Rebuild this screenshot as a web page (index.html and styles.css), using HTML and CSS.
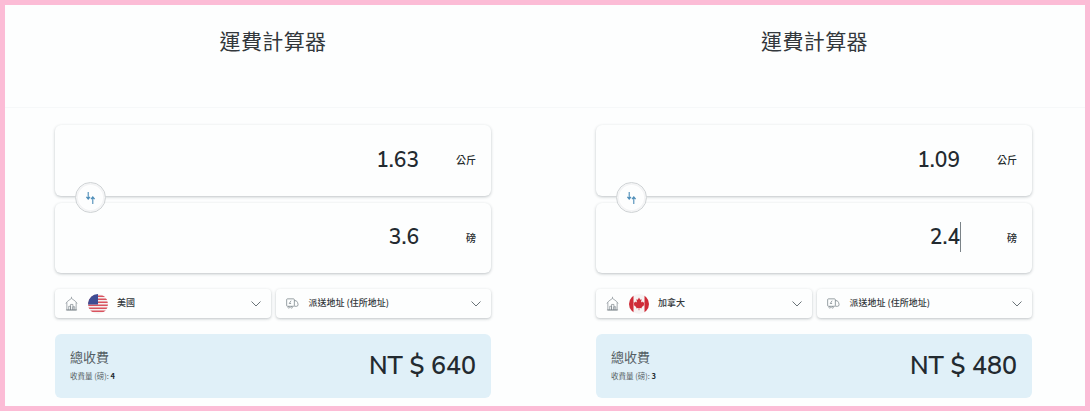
FILE: index.html
```html
<!DOCTYPE html>
<html lang="zh-Hant">
<head>
  <meta charset="UTF-8">
  <meta name="viewport" content="width=device-width, initial-scale=1.0">
  <title>運費計算器</title>
  <link rel="stylesheet" href="styles.css">
</head>
<body>
  <svg class="defs" width="0" height="0" aria-hidden="true">
    <symbol id="icon-home" viewBox="0 0 14 16">
      <path d="M1 8 Q1.5 6 7 2.5 Q12.5 6 13 8 M2 7 V15 H12 V7 M1 15 H13 M7 2.5 V.8 M4 15 V11 H6 V15 M6 15 V9 H8.5 V15 M8.5 15 V11.5 H10.5 V15" fill="none" stroke="#778187" stroke-width=".7"/>
    </symbol>
    <symbol id="icon-truck" viewBox="0 0 14 12">
      <path d="M1.5 1 H8 Q9 1 9 2 V8 Q9 9 8 9 H1.5 Q.7 9 .7 8 V2 Q.7 1 1.5 1 Z M9 3 H11 Q13 5 13 7 Q13 9 11.5 9 H9 M5.5 3 L3.5 6 H5.5" fill="none" stroke="#778187" stroke-width=".8"/>
      <circle cx="3" cy="10.2" r=".9" fill="none" stroke="#778187" stroke-width=".6"/>
      <circle cx="6" cy="10.2" r=".9" fill="none" stroke="#778187" stroke-width=".6"/>
    </symbol>
    <symbol id="icon-chevron" viewBox="0 0 10 6">
      <path d="M.5 .5 L5 5 L9.5 .5" fill="none" stroke="#6b7479" stroke-width="1"/>
    </symbol>
    <symbol id="icon-swap" viewBox="0 0 12 14">
      <path d="M3.5 .5 V8 M1.5 5.8 L3.5 8.2 L5.5 5.8 M8.5 13.5 V6 M6.5 8.2 L8.5 5.8 L10.5 8.2" fill="none" stroke="#4d8db8" stroke-width="1.2"/>
    </symbol>
    <symbol id="flag-us" viewBox="0 0 20 20">
      <rect width="20" height="20" fill="#f4f1f1"/>
      <path d="M0 1.5 H20 V3 H0 Z M0 4.5 H20 V6 H0 Z M0 7.5 H20 V9 H0 Z M0 10.5 H20 V12 H0 Z M0 13.5 H20 V15 H0 Z M0 16.5 H20 V18 H0 Z" fill="#d9535f"/>
      <rect width="10" height="10.5" fill="#3f4d94"/>
    </symbol>
    <symbol id="flag-ca" viewBox="0 0 20 20">
      <rect width="20" height="20" fill="#f6f3f3"/>
      <rect width="4.5" height="20" fill="#cf2b37"/>
      <rect x="15.5" width="4.5" height="20" fill="#cf2b37"/>
      <path d="M10 3.5 L11.2 5.8 L12.6 5.2 L12 8.6 L13.4 7.4 L14 8.6 L15.4 8.3 L14.8 10.4 L15.5 10.8 L12.6 13.2 L12.9 14.2 L10.3 13.9 V16.2 H9.7 V13.9 L7.1 14.2 L7.4 13.2 L4.5 10.8 L5.2 10.4 L4.6 8.3 L6 8.6 L6.6 7.4 L8 8.6 L7.4 5.2 L8.8 5.8 Z" fill="#cf2b37"/>
    </symbol>
  </svg>

  <main class="frame">
    <section class="calc">
      <header class="calc-head">
        <h1>運費計算器</h1>
      </header>
      <div class="calc-body">
        <div class="weights">
          <div class="weight-card">
            <span class="weight-value">1.63</span>
            <span class="weight-unit">公斤</span>
          </div>
          <div class="weight-card">
            <span class="weight-value">3.6</span>
            <span class="weight-unit">磅</span>
          </div>
          <button class="swap" type="button" aria-label="swap"><svg><use href="#icon-swap"/></svg></button>
        </div>
        <div class="selects">
          <div class="select">
            <svg class="select-icon"><use href="#icon-home"/></svg>
            <svg class="flag"><use href="#flag-us"/></svg>
            <span class="select-text">美國</span>
            <svg class="chevron"><use href="#icon-chevron"/></svg>
          </div>
          <div class="select">
            <svg class="select-icon"><use href="#icon-truck"/></svg>
            <span class="select-text">派送地址 (住所地址)</span>
            <svg class="chevron"><use href="#icon-chevron"/></svg>
          </div>
        </div>
        <div class="total">
          <div>
            <div class="total-label">總收費</div>
            <div class="total-note">收費量 (磅): <b>4</b></div>
          </div>
          <div class="total-price">NT $ 640</div>
        </div>
      </div>
    </section>

    <section class="calc calc-right">
      <header class="calc-head">
        <h1>運費計算器</h1>
      </header>
      <div class="calc-body">
        <div class="weights">
          <div class="weight-card">
            <span class="weight-value">1.09</span>
            <span class="weight-unit">公斤</span>
          </div>
          <div class="weight-card">
            <span class="weight-value weight-value-focus">2.4</span>
            <span class="weight-unit">磅</span>
          </div>
          <button class="swap" type="button" aria-label="swap"><svg><use href="#icon-swap"/></svg></button>
        </div>
        <div class="selects">
          <div class="select">
            <svg class="select-icon"><use href="#icon-home"/></svg>
            <svg class="flag"><use href="#flag-ca"/></svg>
            <span class="select-text">加拿大</span>
            <svg class="chevron"><use href="#icon-chevron"/></svg>
          </div>
          <div class="select">
            <svg class="select-icon"><use href="#icon-truck"/></svg>
            <span class="select-text">派送地址 (住所地址)</span>
            <svg class="chevron"><use href="#icon-chevron"/></svg>
          </div>
        </div>
        <div class="total">
          <div>
            <div class="total-label">總收費</div>
            <div class="total-note">收費量 (磅): <b>3</b></div>
          </div>
          <div class="total-price">NT $ 480</div>
        </div>
      </div>
    </section>
  </main>
</body>
</html>
```

FILE: styles.css
```css
:root {
  --pink: #fcbcd6;
  --paper: #fdfefe;
  --text-dark: #232a30;
  --text-mid: #555e64;
  --shadow: 0 1px 3px rgba(60, 70, 80, 0.32);
  --radius: 6px;
}

* {
  box-sizing: border-box;
  margin: 0;
  padding: 0;
}

html, body {
  height: 100%;
  overflow: hidden;
}

body {
  font-family: "Nunito Sans", Inter, "Noto Sans CJK TC", sans-serif;
  background: var(--paper);
  color: var(--text-dark);
}

.defs {
  position: absolute;
}

.frame {
  display: flex;
  height: 411px;
  border: 5px solid var(--pink);
  background: var(--paper);
}

.calc {
  flex: 0 0 540px;
}

.calc-head {
  height: 103px;
  padding-top: 20px;
  text-align: center;
  border-bottom: 1px solid #f6f8f9;
}

.calc-head h1 {
  font-family: "Noto Sans CJK TC", sans-serif;
  font-size: 21px;
  font-weight: 400;
  line-height: 30px;
  letter-spacing: 0.4px;
  color: #33383c;
  padding-right: 4px;
}

.calc-body {
  padding: 17px 54px 0 50px;
}

.calc-right .calc-body {
  padding: 17px 53px 0 51px;
}

.calc-right .calc-head h1 {
  padding-right: 1px;
}

.weights {
  position: relative;
  display: flex;
  flex-direction: column;
  gap: 7px;
}

.weight-card {
  display: flex;
  align-items: center;
  justify-content: flex-end;
  height: 71px;
  padding: 0 15px 2px 0;
  background: var(--paper);
  border-radius: var(--radius);
  box-shadow: var(--shadow);
}

.weight-card + .weight-card {
  height: 70px;
}

.weight-value {
  font-size: 21px;
  font-weight: 600;
  line-height: 30px;
  color: var(--text-dark);
}

.weight-value-focus {
  margin-right: -1px;
  border-right: 1px solid #7b8388;
}

.weight-unit {
  flex: 0 0 57px;
  text-align: right;
  font-family: "Noto Sans CJK TC", sans-serif;
  font-size: 10px;
  font-weight: 500;
  color: #23282c;
}

.swap {
  position: absolute;
  left: 20px;
  top: 57px;
  width: 31px;
  height: 31px;
  display: flex;
  align-items: center;
  justify-content: center;
  background: var(--paper);
  border: 1px solid #cfd3d5;
  border-radius: 50%;
  box-shadow: inset 0 0 0 2px #f4f5f6, inset 0 0 2px 3px #fff;
}

.swap svg {
  width: 11px;
  height: 14px;
}

.selects {
  display: flex;
  gap: 5px;
  margin-top: 16px;
}

.select {
  flex: 1;
  display: flex;
  align-items: center;
  height: 29px;
  padding: 0 10px;
  background: var(--paper);
  border-radius: 4px;
  box-shadow: var(--shadow);
}

.select-icon {
  width: 13px;
  height: 15px;
  flex: none;
}

.flag {
  width: 20px;
  height: 20px;
  flex: none;
  margin-left: 10px;
  border-radius: 50%;
}

.select-text {
  margin: -2px 0 0 10px;
  font-family: "Noto Sans CJK TC", sans-serif;
  font-size: 9px;
  font-weight: 500;
  color: #33383c;
}

.flag + .select-text {
  margin-left: 9px;
}

.chevron {
  width: 10px;
  height: 6px;
  flex: none;
  margin-left: auto;
  margin-right: 0;
}

.total {
  display: flex;
  align-items: center;
  justify-content: space-between;
  height: 64px;
  margin-top: 16px;
  padding: 0 15px;
  background: #e0f0f8;
  border-radius: var(--radius);
}

.total-label {
  margin-top: -3px;
  font-family: "Noto Sans CJK TC", sans-serif;
  font-size: 13px;
  line-height: 18px;
  color: var(--text-mid);
}

.total-note {
  margin-top: 5px;
  font-size: 7.5px;
  line-height: 10px;
  font-family: "Noto Sans CJK TC", sans-serif;
  color: var(--text-mid);
}

.total-note b {
  color: var(--text-dark);
}

.total-price {
  font-size: 25px;
  font-weight: 600;
  line-height: 36px;
  color: var(--text-dark);
}
```
